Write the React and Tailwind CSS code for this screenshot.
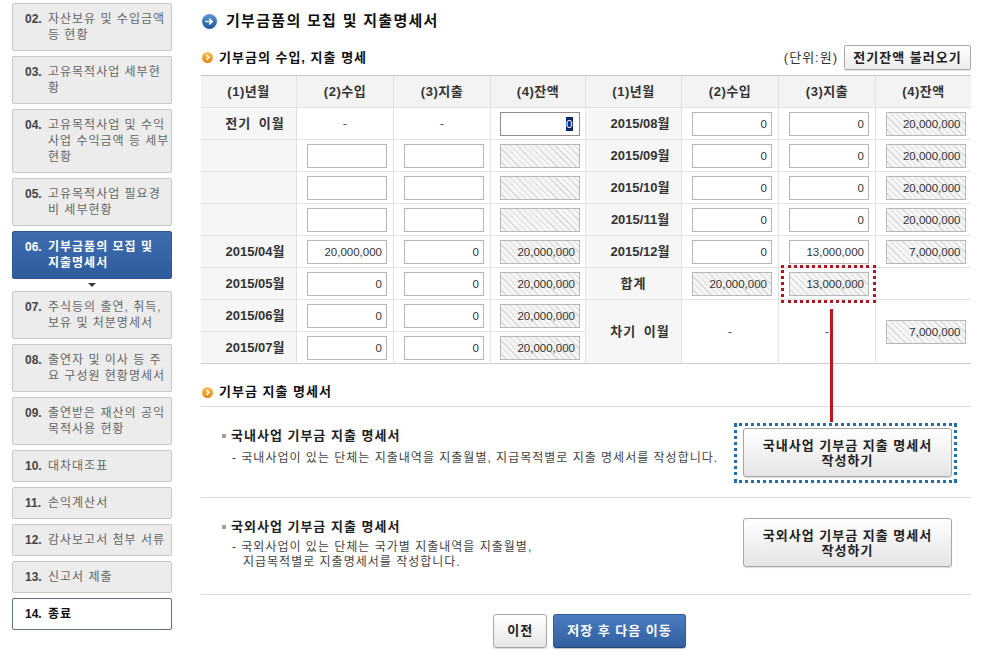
import React from "react";

const HATCH =
  "bg-[#f3f3f3] bg-[image:repeating-linear-gradient(45deg,#f5f5f5_0px,#f5f5f5_3.5px,#dadada_3.5px,#dadada_4.5px)]";

const sideItems = [
  { n: "02.", lines: ["자산보유 및 수입금액", "등 현황"] },
  { n: "03.", lines: ["고유목적사업 세부현", "황"] },
  { n: "04.", lines: ["고유목적사업 및 수익", "사업 수익금액 등 세부", "현황"] },
  { n: "05.", lines: ["고유목적사업 필요경", "비 세부현황"] },
  { n: "06.", lines: ["기부금품의 모집 및", "지출명세서"], active: true },
  { n: "07.", lines: ["주식등의 출연, 취득,", "보유 및 처분명세서"] },
  { n: "08.", lines: ["출연자 및 이사 등 주", "요 구성원 현황명세서"] },
  { n: "09.", lines: ["출연받은 재산의 공익", "목적사용 현황"] },
  { n: "10.", lines: ["대차대조표"] },
  { n: "11.", lines: ["손익계산서"] },
  { n: "12.", lines: ["감사보고서 첨부 서류"] },
  { n: "13.", lines: ["신고서 제출"] },
  { n: "14.", lines: ["종료"], last: true },
];

function SideItem({ item }) {
  if (item.active) {
    return (
      <>
        <div className="flex border border-[#2c5893] rounded-[2px] bg-linear-to-b from-[#3f6db0] to-[#2e5c9d] pl-[12px] py-[7px] text-[12px] leading-[16px] text-white font-bold">
          <span className="w-[23px] shrink-0">{item.n}</span>
          <div className="whitespace-nowrap tracking-[1px]">
            {item.lines.map((l, i) => (
              <div key={i}>{l}</div>
            ))}
          </div>
        </div>
        <div className="h-[12px] flex items-center justify-center">
          <div className="w-0 h-0 border-l-[4px] border-r-[4px] border-t-[4px] border-l-transparent border-r-transparent border-t-[#3a3a3a]" />
        </div>
      </>
    );
  }
  if (item.last) {
    return (
      <div className="mb-[5px] flex border border-[#5d6d7a] rounded-[2px] bg-white pl-[12px] py-[7px] text-[12px] leading-[16px] font-bold text-[#111]">
        <span className="w-[23px] shrink-0">{item.n}</span>
        <div className="whitespace-nowrap tracking-[1px]">
          {item.lines.map((l, i) => (
            <div key={i}>{l}</div>
          ))}
        </div>
      </div>
    );
  }
  return (
    <div className="mb-[5px] flex border border-[#c8c8c8] rounded-[2px] bg-[#ececec] pl-[12px] py-[7px] text-[12px] leading-[16px]">
      <span className="w-[23px] shrink-0 font-bold text-[#444]">{item.n}</span>
      <div className="whitespace-nowrap text-[#666] tracking-[1px]">
        {item.lines.map((l, i) => (
          <div key={i}>{l}</div>
        ))}
      </div>
    </div>
  );
}

function BlueIcon() {
  return (
    <svg width="15" height="15" viewBox="0 0 15 15">
      <defs>
        <linearGradient id="bIc" x1="0" y1="0" x2="0" y2="1">
          <stop offset="0" stopColor="#5d9ad6" />
          <stop offset="1" stopColor="#1b5794" />
        </linearGradient>
      </defs>
      <circle cx="7.5" cy="7.5" r="7.5" fill="url(#bIc)" />
      <path d="M4 7.5h6.2M7.6 5l2.6 2.5-2.6 2.5" stroke="#fff" strokeWidth="1.6" fill="none" strokeLinecap="round" strokeLinejoin="round" />
    </svg>
  );
}

function OrangeIcon() {
  return (
    <svg width="11" height="11" viewBox="0 0 11 11">
      <defs>
        <linearGradient id="oIc" x1="0" y1="0" x2="0" y2="1">
          <stop offset="0" stopColor="#fbc25a" />
          <stop offset="1" stopColor="#e5820e" />
        </linearGradient>
      </defs>
      <circle cx="5.5" cy="5.5" r="5.5" fill="url(#oIc)" />
      <path d="M4.5 3.2l2.3 2.3-2.3 2.3" stroke="#fff" strokeWidth="1.5" fill="none" />
    </svg>
  );
}

function Box({ v, ro }) {
  return (
    <div
      className={
        ro
          ? `w-20 h-6 border border-[#b7b7b7] ${HATCH} text-right pr-[4px] text-[11.5px] leading-[22px] text-[#333]`
          : "w-20 h-6 border border-[#b7b7b7] bg-white text-right pr-[4px] text-[11.5px] leading-[22px] text-[#333]"
      }
    >
      {v}
    </div>
  );
}

function Cell({ c, col, lastRow }) {
  const [t, v, extra] = c;
  const base =
    "relative flex items-center justify-center border-b border-[#e2e2e2] " +
    (col === 7 ? "" : "border-r ") +
    (extra === "span" ? "row-span-2 " : "") +
    (lastRow || extra === "span" ? "border-b-[#cdcdcd] " : "");
  if (t === "H")
    return (
      <div className={base + "bg-[#f3f3f3] text-[13px] font-bold text-[#333] tracking-[0.5px]"}>{v}</div>
    );
  if (t === "L") {
    const korean = v === "합계" || v === "전기 이월" || v === "차기 이월";
    return (
      <div
        className={
          base +
          (v === "합계" ? "" : "pl-[13px] ") +
          (korean ? "tracking-[1px] [word-spacing:3px] " : "") +
          "bg-[#f6f6f6] text-[13px] font-bold text-[#333] whitespace-nowrap"
        }
      >
        {v}
      </div>
    );
  }
  if (t === "D") return <div className={base + "text-[13px] text-[#555]"}>-</div>;
  if (t === "E") return <div className={base} />;
  if (t === "F")
    return (
      <div className={base + "pl-[4px]"}>
        <div className="w-20 h-6 border border-[#8e8e8e] bg-white flex items-center justify-end pr-[6px]">
          <span className="bg-[#0a246a] text-white text-[11.5px] leading-[14px] px-[0.5px]">0</span>
        </div>
      </div>
    );
  if (t === "I")
    return (
      <div className={base + "pl-[4px]"}>
        <Box v={v} />
      </div>
    );
  if (t === "R")
    return (
      <div className={base + "pl-[4px]"}>
        <Box v={v} ro />
        {extra === "mark" && (
          <div className="absolute left-[2px] -right-[1px] -top-[3px] -bottom-[4px] border-[3px] border-dotted border-[#b3161e] z-10" />
        )}
      </div>
    );
  return null;
}

const header = ["(1)년월", "(2)수입", "(3)지출", "(4)잔액", "(1)년월", "(2)수입", "(3)지출", "(4)잔액"].map(
  (h) => ["H", h]
);

const rows = [
  [["L", "전기 이월"], ["D"], ["D"], ["F"], ["L", "2015/08월"], ["I", "0"], ["I", "0"], ["R", "20,000,000"]],
  [["L", ""], ["I", ""], ["I", ""], ["R", ""], ["L", "2015/09월"], ["I", "0"], ["I", "0"], ["R", "20,000,000"]],
  [["L", ""], ["I", ""], ["I", ""], ["R", ""], ["L", "2015/10월"], ["I", "0"], ["I", "0"], ["R", "20,000,000"]],
  [["L", ""], ["I", ""], ["I", ""], ["R", ""], ["L", "2015/11월"], ["I", "0"], ["I", "0"], ["R", "20,000,000"]],
  [["L", "2015/04월"], ["I", "20,000,000"], ["I", "0"], ["R", "20,000,000"], ["L", "2015/12월"], ["I", "0"], ["I", "13,000,000"], ["R", "7,000,000"]],
  [["L", "2015/05월"], ["I", "0"], ["I", "0"], ["R", "20,000,000"], ["L", "합계"], ["R", "20,000,000"], ["R", "13,000,000", "mark"], ["E"]],
  [["L", "2015/06월"], ["I", "0"], ["I", "0"], ["R", "20,000,000"], ["L", "차기 이월", "span"], ["D", null, "span"], ["D", null, "span"], ["R", "7,000,000", "span"]],
  [["L", "2015/07월"], ["I", "0"], ["I", "0"], ["R", "20,000,000"]],
];

function BigButton({ children }) {
  return (
    <div className="w-[209px] h-[49px] flex flex-col items-center justify-center border border-[#a8a8a8] rounded-[3px] bg-linear-to-b from-white to-[#e4e4e4] shadow-[0_1px_1px_rgba(0,0,0,0.15)] text-[13px] font-bold leading-[15px] text-[#222] tracking-[1px]">
      {children}
    </div>
  );
}

export default function App() {
  return (
    <div className="relative w-[981px] h-[658px] overflow-hidden bg-white flex font-['Liberation_Sans','Noto_Sans_CJK_KR',sans-serif] text-[#333]">
      {/* Sidebar */}
      <div className="w-[201px] shrink-0 pl-[12px] pr-[29px] pt-[3px] flex flex-col">
        {sideItems.map((it) => (
          <SideItem key={it.n} item={it} />
        ))}
      </div>

      {/* Main */}
      <div className="w-[770px] shrink-0 flex flex-col">
        <div className="mt-[11px] h-[20px] flex items-center">
          <span className="ml-[1px] flex">
            <BlueIcon />
          </span>
          <span className="ml-[9px] text-[15px] font-bold text-[#111] tracking-[1.3px]">
            기부금품의 모집 및 지출명세서
          </span>
        </div>

        <div className="mt-[14px] h-[25px] flex items-center justify-between">
          <div className="flex items-center">
            <span className="ml-[1px] flex">
              <OrangeIcon />
            </span>
            <span className="ml-[6px] text-[13px] font-bold text-[#111] tracking-[1px]">
              기부금의 수입, 지출 명세
            </span>
          </div>
          <div className="flex items-center">
            <span className="text-[13px] text-[#333] mr-[6px] tracking-[1px]">(단위:원)</span>
            <div className="w-[127px] h-[25px] flex items-center justify-center border border-[#aaaaaa] rounded-[2px] bg-linear-to-b from-white to-[#ececec] shadow-[0_1px_1px_rgba(0,0,0,0.12)] text-[13px] font-bold text-[#222] tracking-[1px]">
              전기잔액 불러오기
            </div>
          </div>
        </div>

        <div className="mt-[5px] grid grid-cols-[96px_97px_97px_95px_96px_97px_97px_95px] auto-rows-[32px] border-t border-[#c9c9c9]">
          {header.map((c, i) => (
            <Cell key={"h" + i} c={c} col={i} />
          ))}
          {rows.map((r, ri) =>
            r.map((c, ci) => (
              <Cell key={ri + "-" + ci} c={c} col={ci} lastRow={ri === rows.length - 1} />
            ))
          )}
        </div>

        <div className="pt-[18px] pb-[4px] border-b border-[#dcdcdc]">
          <div className="h-[20px] flex items-center">
            <span className="ml-[1px] flex">
              <OrangeIcon />
            </span>
            <span className="ml-[6px] text-[13px] font-bold text-[#111] tracking-[1px]">기부금 지출 명세서</span>
          </div>
        </div>

        <div className="h-[91px] flex items-start justify-between border-b border-[#dcdcdc] pl-[21px] pr-[19px]">
          <div className="mt-[21px]">
            <div className="flex items-center h-[16px]">
              <span className="w-[4px] h-[4px] bg-[#a0a0a0] mr-[5px]" />
              <span className="text-[13px] font-bold text-[#222] tracking-[1px]">국내사업 기부금 지출 명세서</span>
            </div>
            <div className="mt-[6px] pl-[10px] text-[12px] leading-[16px] text-[#444] whitespace-nowrap tracking-[1px]">
              - 국내사업이 있는 단체는 지출내역을 지출월별, 지급목적별로 지출 명세서를 작성합니다.
            </div>
          </div>
          <div className="relative mt-[21px]">
            <BigButton>
              <span>국내사업 기부금 지출 명세서</span>
              <span>작성하기</span>
            </BigButton>
            <div className="absolute -left-[9px] -right-[5px] -top-[5px] -bottom-[6px] border-[3px] border-dotted border-[#1e6eb0]" />
          </div>
        </div>

        <div className="h-[97px] flex items-start justify-between border-b border-[#dcdcdc] pl-[21px] pr-[19px]">
          <div className="mt-[21px]">
            <div className="flex items-center h-[16px]">
              <span className="w-[4px] h-[4px] bg-[#a0a0a0] mr-[5px]" />
              <span className="text-[13px] font-bold text-[#222] tracking-[1px]">국외사업 기부금 지출 명세서</span>
            </div>
            <div className="mt-[5px] pl-[10px] text-[12px] leading-[15px] text-[#444] whitespace-nowrap tracking-[1px]">
              <div>- 국외사업이 있는 단체는 국가별 지출내역을 지출월별,</div>
              <div className="pl-[11px]">지급목적별로 지출명세서를 작성합니다.</div>
            </div>
          </div>
          <div className="mt-[20px]">
            <BigButton>
              <span>국외사업 기부금 지출 명세서</span>
              <span>작성하기</span>
            </BigButton>
          </div>
        </div>

        <div className="mt-[19px] flex justify-center gap-[6px] pl-[7px]">
          <div className="h-[34px] px-[13px] flex items-center border border-[#a8a8a8] rounded-[3px] bg-linear-to-b from-white to-[#e6e6e6] shadow-[0_1px_1px_rgba(0,0,0,0.15)] text-[13px] font-bold text-[#222] tracking-[1px]">
            이전
          </div>
          <div className="h-[34px] px-[13px] flex items-center border border-[#2f5d99] border-b-[#1f4677] rounded-[3px] bg-linear-to-b from-[#4b7dc0] to-[#315f9f] shadow-[0_1px_1px_rgba(0,0,0,0.25)] text-[13px] font-bold text-white tracking-[1px]">
            저장 후 다음 이동
          </div>
        </div>
      </div>

      {/* annotation line */}
      <div className="absolute left-[830px] top-[309px] w-[3px] h-[113px] bg-[#c5121c]" />
    </div>
  );
}
